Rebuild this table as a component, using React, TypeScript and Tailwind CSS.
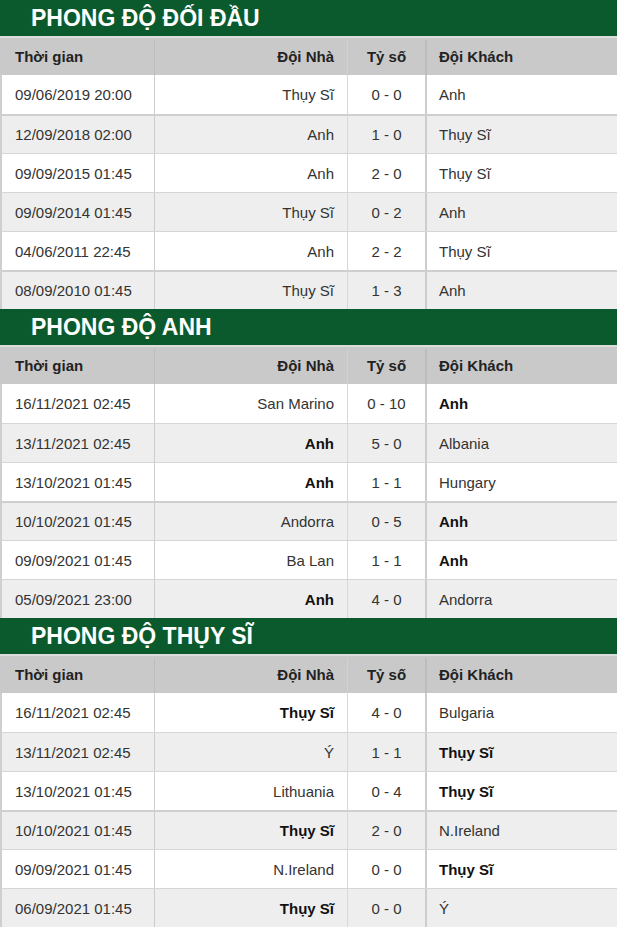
import React from "react";

type Row = { t: string; h: string; s: string; a: string; hb?: boolean; ab?: boolean; thick?: boolean };

const sections: { title: string; rows: Row[] }[] = [
  {
    title: "PHONG ĐỘ ĐỐI ĐẦU",
    rows: [
      { t: "09/06/2019 20:00", h: "Thụy Sĩ", s: "0 - 0", a: "Anh" },
      { t: "12/09/2018 02:00", h: "Anh", s: "1 - 0", a: "Thụy Sĩ", thick: true },
      { t: "09/09/2015 01:45", h: "Anh", s: "2 - 0", a: "Thụy Sĩ" },
      { t: "09/09/2014 01:45", h: "Thụy Sĩ", s: "0 - 2", a: "Anh" },
      { t: "04/06/2011 22:45", h: "Anh", s: "2 - 2", a: "Thụy Sĩ" },
      { t: "08/09/2010 01:45", h: "Thụy Sĩ", s: "1 - 3", a: "Anh", thick: true },
    ],
  },
  {
    title: "PHONG ĐỘ ANH",
    rows: [
      { t: "16/11/2021 02:45", h: "San Marino", s: "0 - 10", a: "Anh", ab: true },
      { t: "13/11/2021 02:45", h: "Anh", s: "5 - 0", a: "Albania", hb: true },
      { t: "13/10/2021 01:45", h: "Anh", s: "1 - 1", a: "Hungary", hb: true },
      { t: "10/10/2021 01:45", h: "Andorra", s: "0 - 5", a: "Anh", ab: true, thick: true },
      { t: "09/09/2021 01:45", h: "Ba Lan", s: "1 - 1", a: "Anh", ab: true },
      { t: "05/09/2021 23:00", h: "Anh", s: "4 - 0", a: "Andorra", hb: true },
    ],
  },
  {
    title: "PHONG ĐỘ THỤY SĨ",
    rows: [
      { t: "16/11/2021 02:45", h: "Thụy Sĩ", s: "4 - 0", a: "Bulgaria", hb: true },
      { t: "13/11/2021 02:45", h: "Ý", s: "1 - 1", a: "Thụy Sĩ", ab: true },
      { t: "13/10/2021 01:45", h: "Lithuania", s: "0 - 4", a: "Thụy Sĩ", ab: true },
      { t: "10/10/2021 01:45", h: "Thụy Sĩ", s: "2 - 0", a: "N.Ireland", hb: true, thick: true },
      { t: "09/09/2021 01:45", h: "N.Ireland", s: "0 - 0", a: "Thụy Sĩ", ab: true },
      { t: "06/09/2021 01:45", h: "Thụy Sĩ", s: "0 - 0", a: "Ý", hb: true },
    ],
  },
];

function Section({ title, rows }: { title: string; rows: Row[] }) {
  return (
    <div className="flex flex-col">
      <div className="h-[36px] bg-[#0b5a2e] flex items-center pl-[31px] pt-[1px]">
        <span className="text-white font-bold text-[23px] leading-none">{title}</span>
      </div>
      <div className="h-[39px] bg-[#c9c9c9] flex text-[15px] font-bold text-[#222] border-t-2 border-[#dcdcdc] pt-[2px]">
        <div className="w-[155px] flex items-center pl-[15px] border-r border-[#bdbdbd]">Thời gian</div>
        <div className="w-[193px] flex items-center justify-end pr-[13px] border-r border-[#d2d2d2]">Đội Nhà</div>
        <div className="w-[79px] flex items-center justify-center border-r-2 border-[#bdbdbd]">Tỷ số</div>
        <div className="flex-1 flex items-center pl-[12px]">Đội Khách</div>
      </div>
      {rows.map((r, i) => (
        <div
          key={i}
          className={
            "h-[39px] flex text-[15px] text-[#333] border-l-2 border-l-[#cfcfcf] " +
            (i % 2 === 0 ? "bg-white " : "bg-[#eeeeee] ") +
            (r.thick ? "border-t-2 border-t-[#cfcfcf]" : i === 0 ? "" : "border-t border-t-[#d6d6d6]")
          }
        >
          <div className="w-[153px] flex items-center pl-[13px] pt-[2px] border-r border-[#cdcdcd]">{r.t}</div>
          <div className={"w-[193px] flex items-center justify-end pr-[13px] pt-[2px] border-r border-[#d8d8d8] " + (r.hb ? "font-bold text-[#111]" : "")}>
            {r.h}
          </div>
          <div className="w-[79px] flex items-center justify-center pt-[2px] border-r-2 border-[#cdcdcd]">{r.s}</div>
          <div className={"flex-1 flex items-center pl-[12px] pt-[2px] " + (r.ab ? "font-bold text-[#111]" : "")}>{r.a}</div>
        </div>
      ))}
    </div>
  );
}

export default function App() {
  return (
    <div className="w-[617px] h-[927px] overflow-hidden bg-white" style={{ fontFamily: '"Liberation Sans", Arial, sans-serif' }}>
      {sections.map((s, i) => (
        <Section key={i} title={s.title} rows={s.rows} />
      ))}
    </div>
  );
}
